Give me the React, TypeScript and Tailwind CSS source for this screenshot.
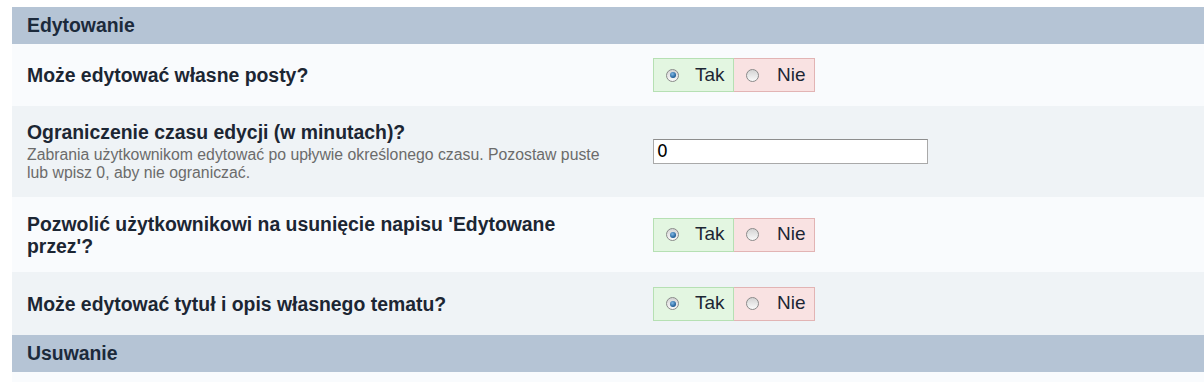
import React from "react";

function Radio({ checked }: { checked: boolean }) {
  return (
    <span className="relative inline-flex h-[13px] w-[13px] items-center justify-center rounded-full border border-[#8a8a8a] bg-gradient-to-b from-[#d4d4d4] to-[#fafafa]">
      {checked && (
        <span className="h-[6px] w-[6px] rounded-full bg-[radial-gradient(circle_at_40%_35%,#7fb8e6,#1d5c95_70%,#103c66)]" />
      )}
    </span>
  );
}

function YesNo() {
  return (
    <div className="flex h-[34px] w-[162px] text-[19px] text-[#1c2633]">
      <label className="flex w-[81px] items-center border border-[#b6e0b3] bg-[#e3f6e1] pl-[12px]">
        <Radio checked />
        <span className="ml-[16px]">Tak</span>
      </label>
      <label className="flex w-[81px] items-center border border-l-0 border-[#e2b4b4] bg-[#f9e2e2] pl-[12px]">
        <Radio checked={false} />
        <span className="ml-[18px]">Nie</span>
      </label>
    </div>
  );
}

function Header({ title }: { title: string }) {
  return (
    <div className="flex h-[37px] items-center bg-[#b5c4d5] pl-[15px] text-[19.4px] font-bold text-[#1c2a3b]">
      {title}
    </div>
  );
}

function Row({
  h,
  bg,
  label,
  desc,
  children,
}: {
  h: string;
  bg: string;
  label: React.ReactNode;
  desc?: React.ReactNode;
  children: React.ReactNode;
}) {
  return (
    <div className={`grid grid-cols-[628px_1fr] items-center ${h} ${bg}`}>
      <div className="pl-[15px] pr-[10px]">
        <div className="text-[19.4px] font-bold leading-[22px] text-[#1c2633]">{label}</div>
        {desc && (
          <div className="mt-[3px] text-[15.8px] leading-[18px] text-[#6b6b6b]">{desc}</div>
        )}
      </div>
      <div className="pl-[13px]">{children}</div>
    </div>
  );
}

export default function App() {
  return (
    <div
      className="min-h-[382px] bg-white pl-[12px] pt-[7px]"
      style={{ fontFamily: '"Liberation Sans", Arial, sans-serif' }}
    >
      <Header title="Edytowanie" />
      <Row h="h-[62px]" bg="bg-[#f9fbfd]" label="Może edytować własne posty?">
        <YesNo />
      </Row>
      <Row
        h="h-[91px]"
        bg="bg-[#eff3f6]"
        label="Ograniczenie czasu edycji (w minutach)?"
        desc={
          <>
            Zabrania użytkownikom edytować po upływie określonego czasu. Pozostaw puste
            <br />
            lub wpisz 0, aby nie ograniczać.
          </>
        }
      >
        <input
          type="text"
          defaultValue="0"
          className="h-[25px] w-[275px] border border-[#a9a9a9] border-t-[#8d8d8d] bg-white px-[3px] text-[17px] text-black outline-none"
          style={{ fontFamily: '"DejaVu Sans", Verdana, sans-serif' }}
        />
      </Row>
      <Row
        h="h-[75px]"
        bg="bg-[#f9fbfd]"
        label={
          <>
            Pozwolić użytkownikowi na usunięcie napisu 'Edytowane
            <br />
            przez'?
          </>
        }
      >
        <YesNo />
      </Row>
      <Row h="h-[63px]" bg="bg-[#eff3f6]" label="Może edytować tytuł i opis własnego tematu?">
        <YesNo />
      </Row>
      <Header title="Usuwanie" />
      <div className="h-[10px] bg-[#f9fbfd]" />
    </div>
  );
}
